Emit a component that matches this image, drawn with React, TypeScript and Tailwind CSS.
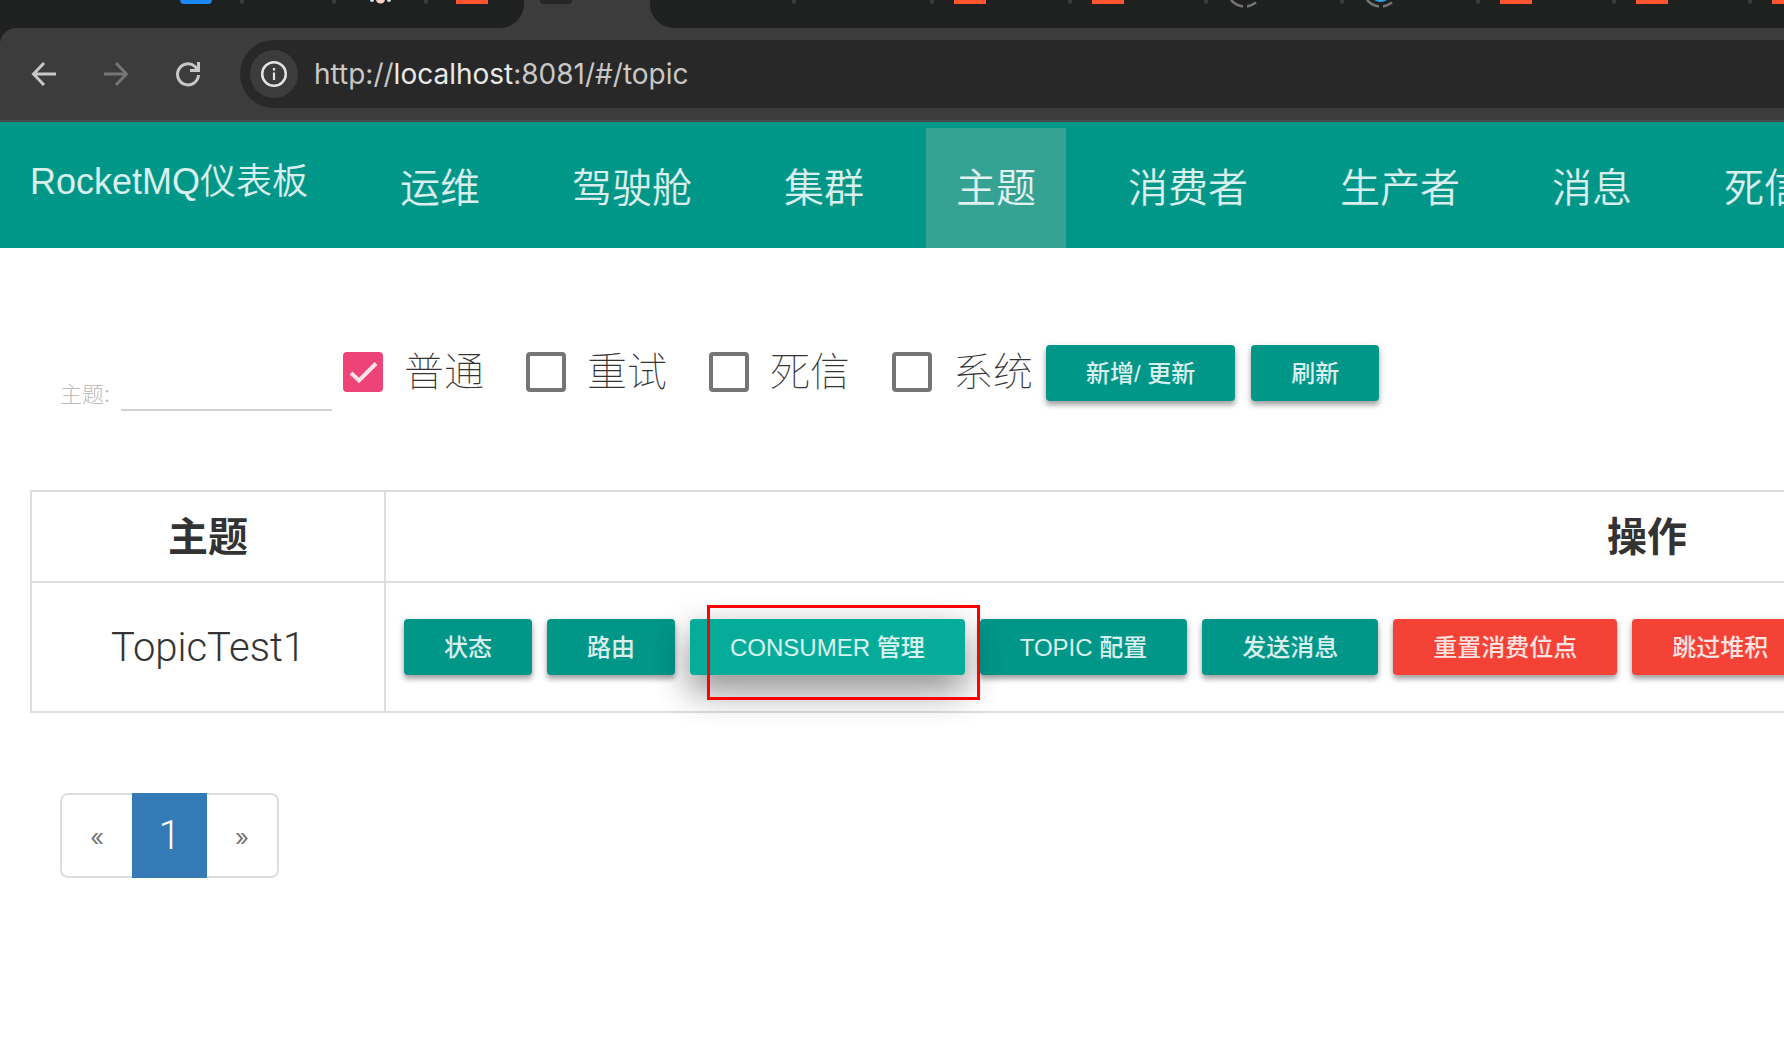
import React, { useState } from 'react';

type Tab = { icon?: 'blue' | 'orange' | 'face' | 'ring' | 'ringBlue'; size: string };

const leftTabs: Tab[] = [
  { icon: 'blue', size: 'w-[92px] pl-7' },
  { size: 'w-[92px] pl-7' },
  { icon: 'face', size: 'w-[92px] pl-7' },
];

const rightTabs: Tab[] = [
  { size: 'w-[146px] pl-5' },
  { size: 'w-[138px] pl-5' },
  { icon: 'orange', size: 'w-[138px] pl-5' },
  { icon: 'orange', size: 'w-[136px] pl-5' },
  { icon: 'ring', size: 'w-[136px] pl-5' },
  { icon: 'ringBlue', size: 'w-[136px] pl-5' },
  { icon: 'orange', size: 'w-[136px] pl-5' },
  { icon: 'orange', size: 'w-[136px] pl-5' },
  { icon: 'orange', size: 'w-[136px] pl-5' },
];

const navItems = ['运维', '驾驶舱', '集群', '主题', '消费者', '生产者', '消息', '死信消息'];

const Favicon = ({ icon }: { icon: Tab['icon'] }) => {
  if (icon === 'blue') return <span className="h-1 w-8 rounded-b bg-[#1b88f5]" />;
  if (icon === 'orange') return <span className="h-1 w-8 bg-[#ff5630]" />;
  if (icon === 'face') {
    return (
      <svg className="h-2 w-8" viewBox="0 0 32 8">
        <circle cx="8" cy="0" r="2" fill="#cfe8f5" />
        <circle cx="25" cy="0" r="2" fill="#cfe8f5" />
        <path d="M12 0h9q-1 3.500-4.500 3.500T12 0z" fill="#fbd0c4" />
      </svg>
    );
  }
  if (icon === 'ring' || icon === 'ringBlue') {
    return (
      <svg className="h-2 w-8" viewBox="0 0 32 8">
        <path d="M3 0Q7 5 15 6.500M19 6.500Q24 5.500 28 2.500" fill="none" stroke="#757575" strokeWidth="2.500" />
        {icon === 'ringBlue' && <path d="M10 0h13q-6 4-13 0z" fill="#2aa7e1" />}
      </svg>
    );
  }
  return <span />;
};

const BrowserTab = ({ tab }: { tab: Tab }) => (
  <div className={`flex shrink-0 items-start justify-between ${tab.size}`}>
    <Favicon icon={tab.icon} />
    <span className="h-1 w-1 rounded-b bg-[#3c3c3c]" />
  </div>
);

const Browser = () => (
  <div className="bg-[#1f2120]">
    <div className="flex h-7 overflow-hidden bg-[#3c3c3c]">
      <div className="flex w-[524px] shrink-0 rounded-br-3xl bg-[#1f2120] pl-[152px]">
        {leftTabs.map((tab, i) => (
          <BrowserTab key={i} tab={tab} />
        ))}
        <div className="flex pl-7">
          <Favicon icon="orange" />
        </div>
      </div>
      <div className="w-[126px] shrink-0 pl-4">
        <div className="h-1 w-8 rounded-b bg-[#252525]" />
      </div>
      <div className="flex flex-1 overflow-hidden rounded-bl-3xl bg-[#1f2120]">
        {rightTabs.map((tab, i) => (
          <BrowserTab key={i} tab={tab} />
        ))}
      </div>
    </div>
    <div className="flex h-[94px] items-center rounded-tl-2xl border-b-2 border-[#4a4a4a] bg-[#3c3c3c] pl-7">
      <div className="flex gap-10">
        <button aria-label="Back" className="text-[#c7c7c7]">
          <svg className="size-8" viewBox="0 0 32 32" fill="none" stroke="currentColor" strokeWidth="3">
            <path d="M28 16H6M16 5L5.500 16L16 27" />
          </svg>
        </button>
        <button aria-label="Forward" className="text-[#757575]">
          <svg className="size-8" viewBox="0 0 32 32" fill="none" stroke="currentColor" strokeWidth="3">
            <path d="M4 16H26M16 5L26.500 16L16 27" />
          </svg>
        </button>
        <button aria-label="Reload" className="text-[#c7c7c7]">
          <svg className="size-8" viewBox="0 0 32 32" fill="none" stroke="currentColor" strokeWidth="3">
            <path d="M26.500 17A10.500 10.500 0 1 1 23 8.500L26 12" />
            <path d="M26.500 4V12.500H18" />
          </svg>
        </button>
      </div>
      <div className="ml-9 flex h-[68px] flex-1 items-center rounded-l-full bg-[#282828] pl-[10px]">
        <span className="flex size-12 items-center justify-center rounded-full bg-[#3c3c3c]">
          <svg className="size-7" viewBox="0 0 28 28" fill="none" stroke="#e3e3e3" strokeWidth="2.500">
            <circle cx="14" cy="14" r="11.800" />
            <path d="M14 12.500V20M14 8V10.500" strokeWidth="2.200" />
          </svg>
        </span>
        <span className="ml-4 font-[Inter,sans-serif] text-[28px] text-[#c7c7c7]">
          http://<span className="text-[#e8e8e8]">localhost</span>:8081/#/topic
        </span>
      </div>
    </div>
  </div>
);

const Checkbox = ({ label, defaultChecked = false }: { label: string; defaultChecked?: boolean }) => {
  const [checked, setChecked] = useState(defaultChecked);
  return (
    <label className="flex h-[53px] items-center gap-[21px] text-[40px] font-thin whitespace-nowrap">
      <span className="grid size-10">
        <input
          type="checkbox"
          checked={checked}
          onChange={() => setChecked(!checked)}
          className="col-start-1 row-start-1 size-10 appearance-none rounded border-4 border-[#757575] checked:border-[#ee4379] checked:bg-[#ee4379]"
        />
        {checked && (
          <svg className="pointer-events-none col-start-1 row-start-1 size-10" viewBox="0 0 40 40">
            <path d="M8 21L16 28.500L33 11.500" fill="none" stroke="#fde3eb" strokeWidth="4" />
          </svg>
        )}
      </span>
      {label}
    </label>
  );
};

const Button = ({ children, color = 'bg-[#009688]', raised = false }: { children: React.ReactNode; color?: string; raised?: boolean }) => (
  <button
    className={`h-14 shrink-0 rounded px-10 pt-[2px] text-2xl font-medium whitespace-nowrap text-white/85 ${color} ${
      raised
        ? 'shadow-[0_16px_34px_rgba(0,0,0,0.3),0_12px_40px_rgba(0,0,0,0.2)]'
        : 'shadow-[0_4px_5px_rgba(0,0,0,0.3),0_2px_10px_rgba(0,0,0,0.12)]'
    }`}
  >
    {children}
  </button>
);

const App = () => {
  return (
    <div className="min-h-screen overflow-hidden bg-white font-['Liberation_Sans','Noto_Sans_CJK_SC',sans-serif] text-[#333]">
      <Browser />

      {/* Navigation */}
      <nav className="flex h-[126px] items-end bg-[#009688] pl-[30px] text-white/85">
        <a href="#/" className="flex h-[132px] w-[340px] shrink-0 items-center text-4xl font-[350] whitespace-nowrap">
          RocketMQ仪表板
        </a>
        <div className="flex gap-8">
          {navItems.map((item) => (
            <a
              key={item}
              href="#/topic"
              className={`flex h-[120px] shrink-0 items-center px-[30px] text-[40px] font-[350] whitespace-nowrap ${
                item === '主题' ? 'bg-[#36a293]' : ''
              }`}
            >
              {item}
            </a>
          ))}
        </div>
      </nav>

      {/* Filters */}
      <form className="flex items-start pt-[97px] pl-[60px]" onSubmit={(e) => e.preventDefault()}>
        <div className="flex h-[66px] items-end gap-[11px]">
          <label htmlFor="topic" className="w-[50px] text-[22px] leading-8 font-light whitespace-nowrap text-[#bdbdbd]">
            主题:
          </label>
          <input id="topic" className="h-12 w-[211px] border-b-2 border-[#d2d2d2] text-2xl outline-none" />
        </div>
        <div className="ml-[11px] flex gap-[42px]">
          <Checkbox label="普通" defaultChecked />
          <Checkbox label="重试" />
          <Checkbox label="死信" />
          <Checkbox label="系统" />
        </div>
        <div className="ml-[13px] flex gap-4">
          <Button>新增/ 更新</Button>
          <Button>刷新</Button>
        </div>
      </form>

      {/* Topic list */}
      <table className="mt-[79px] ml-[30px] w-[2880px] table-fixed border-collapse border-2 border-[#ddd] text-[40px]">
        <thead>
          <tr className="h-[91px]">
            <th className="w-[354px] border-2 border-[#ddd] font-bold">主题</th>
            <th className="border-2 border-[#ddd] font-bold">操作</th>
          </tr>
        </thead>
        <tbody>
          <tr className="h-[130px]">
            <td className="border-2 border-[#ddd] pt-[2px] text-center font-[Roboto,sans-serif] font-light">TopicTest1</td>
            <td className="border-2 border-[#ddd] px-[18px]">
              <div className="flex gap-[15px]">
                <Button>状态</Button>
                <Button>路由</Button>
                <div className="relative flex">
                  <Button color="bg-[#05ac9a]" raised>
                    CONSUMER 管理
                  </Button>
                  <div className="pointer-events-none absolute -top-[14px] left-[17px] z-10 h-[95px] w-[273px] border-3 border-[#fe0000]" />
                </div>
                <Button>TOPIC 配置</Button>
                <Button>发送消息</Button>
                <Button color="bg-[#f44336]">重置消费位点</Button>
                <Button color="bg-[#f44336]">跳过堆积</Button>
                <Button color="bg-[#f44336]">删除</Button>
              </div>
            </td>
          </tr>
        </tbody>
      </table>

      {/* Pagination */}
      <div className="mt-20 ml-[60px] flex h-[85px] w-fit rounded-lg border-2 border-[#ddd]">
        <button aria-label="Previous" className="w-[70px] pt-1 font-[Inter,sans-serif] text-2xl text-[#777]">
          «
        </button>
        <button className="-my-[2px] w-[75px] bg-[#337ab7] font-[Roboto,sans-serif] text-[40px] font-light text-white">1</button>
        <button aria-label="Next" className="w-[70px] pt-1 font-[Inter,sans-serif] text-2xl text-[#777]">
          »
        </button>
      </div>
    </div>
  );
};

export default App;
